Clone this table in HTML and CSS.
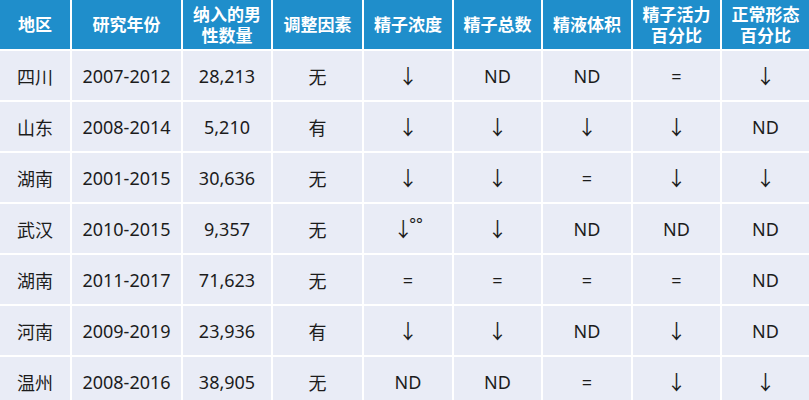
FILE: index.html
```html
<!DOCTYPE html>
<html lang="zh">
<head>
<meta charset="utf-8">
<link rel="stylesheet" href="styles.css">
</head>
<body>
<div class="grid">
  <div class="h">地区</div><div class="h">研究年份</div><div class="h">纳入的男<br>性数量</div><div class="h">调整因素</div><div class="h">精子浓度</div><div class="h">精子总数</div><div class="h">精液体积</div><div class="h">精子活力<br>百分比</div><div class="h">正常形态<br>百分比</div>

  <div class="c">四川</div><div class="c">2007-2012</div><div class="c">28,213</div><div class="c">无</div><div class="c a">↓</div><div class="c">ND</div><div class="c">ND</div><div class="c">=</div><div class="c a">↓</div>

  <div class="c">山东</div><div class="c">2008-2014</div><div class="c">5,210</div><div class="c">有</div><div class="c a">↓</div><div class="c a">↓</div><div class="c a">↓</div><div class="c a">↓</div><div class="c">ND</div>

  <div class="c">湖南</div><div class="c">2001-2015</div><div class="c">30,636</div><div class="c">无</div><div class="c a">↓</div><div class="c a">↓</div><div class="c">=</div><div class="c a">↓</div><div class="c a">↓</div>

  <div class="c">武汉</div><div class="c">2010-2015</div><div class="c">9,357</div><div class="c">无</div><div class="c a"><span class="tight">↓</span><span class="sup">°°</span></div><div class="c a">↓</div><div class="c">ND</div><div class="c">ND</div><div class="c">ND</div>

  <div class="c">湖南</div><div class="c">2011-2017</div><div class="c">71,623</div><div class="c">无</div><div class="c">=</div><div class="c">=</div><div class="c">=</div><div class="c">=</div><div class="c">ND</div>

  <div class="c">河南</div><div class="c">2009-2019</div><div class="c">23,936</div><div class="c">有</div><div class="c a">↓</div><div class="c a">↓</div><div class="c">ND</div><div class="c a">↓</div><div class="c">ND</div>

  <div class="c">温州</div><div class="c">2008-2016</div><div class="c">38,905</div><div class="c">无</div><div class="c">ND</div><div class="c">ND</div><div class="c">=</div><div class="c a">↓</div><div class="c a">↓</div>
</div>
</body>
</html>
```

FILE: styles.css
```css
html, body {
  margin: 0;
  padding: 0;
  background: #ffffff;
  overflow: hidden;
}

.grid {
  display: grid;
  grid-template-columns: 70px 109px 88px 89px 88px 87px 88px 87px 87px;
  grid-template-rows: 49px repeat(7, 49px);
  gap: 2px;
  width: 809px;
  font-family: "Noto Sans", "Noto Sans CJK SC", sans-serif;
}

.h {
  background: #1f8ecb;
  color: #ffffff;
  font-weight: 700;
  font-size: 17px;
  line-height: 21px;
  display: flex;
  align-items: center;
  justify-content: center;
  text-align: center;
}

.c {
  background: #e9ecf6;
  color: #1c1c1c;
  font-size: 18px;
  display: flex;
  align-items: center;
  justify-content: center;
}

.a {
  font-family: "Noto Sans CJK SC", sans-serif;
  font-size: 20px;
}

.tight {
  letter-spacing: -4px;
}

.sup {
  font-family: "Noto Sans", sans-serif;
  font-size: 16px;
  margin-top: -9px;
  letter-spacing: 0;
}
```
